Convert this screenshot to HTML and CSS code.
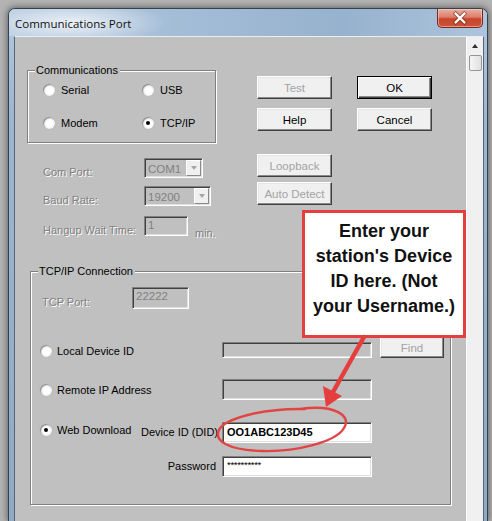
FILE: index.html
```html
<!DOCTYPE html>
<html>
<head>
<meta charset="utf-8">
<title>Communications Port</title>
<link rel="stylesheet" href="styles.css">
</head>
<body>
<div class="window">
  <div class="titlebar">
    <span class="title">Communications Port</span>
    <div class="close">
      <svg width="46" height="18" viewBox="0 0 46 18">
        <path d="M18.5 4.5 L27.5 13.5 M27.5 4.5 L18.5 13.5" stroke="#5a1a10" stroke-width="4.2" stroke-linecap="square" fill="none" opacity="0.55"/>
        <path d="M18.5 4.5 L27.5 13.5 M27.5 4.5 L18.5 13.5" stroke="#ffffff" stroke-width="2.4" stroke-linecap="square" fill="none"/>
      </svg>
    </div>
  </div>
  <div class="client">
    <div class="dialog">
      <div class="top">
        <div class="left">
          <div class="group comms">
            <div class="group-title">Communications</div>
            <div class="radio-grid">
              <div class="radio"><span class="dot"></span>Serial</div>
              <div class="radio"><span class="dot"></span>USB</div>
              <div class="radio"><span class="dot"></span>Modem</div>
              <div class="radio"><span class="dot on"></span>TCP/IP</div>
            </div>
          </div>
          <div class="frow r1">
            <span class="lbl dis">Com Port:</span>
            <div class="combo w59"><span class="cval">COM1</span><span class="arrow"></span></div>
          </div>
          <div class="frow r2">
            <span class="lbl dis">Baud Rate:</span>
            <div class="combo w67"><span class="cval">19200</span><span class="arrow"></span></div>
          </div>
          <div class="frow r3">
            <span class="lbl dis">Hangup Wait Time:</span>
            <div class="tb w44">1</div>
            <span class="unit dis">min.</span>
          </div>
        </div>
        <div class="right">
          <div class="bgrid">
            <div class="btn dis">Test</div>
            <div class="btn def">OK</div>
            <div class="btn">Help</div>
            <div class="btn">Cancel</div>
          </div>
          <div class="bcol">
            <div class="btn dis">Loopback</div>
            <div class="btn dis">Auto Detect</div>
          </div>
        </div>
      </div>

      <div class="group tcp">
        <div class="group-title">TCP/IP Connection</div>
        <div class="trow t1">
          <span class="plbl dis">TCP Port:</span>
          <div class="tb w57">22222</div>
        </div>
        <div class="trow t2">
          <div class="rpart"><span class="dot"></span>Local Device ID</div>
          <div class="tb w150 short"></div>
          <div class="btn dis find">Find</div>
        </div>
        <div class="trow t3">
          <div class="rpart"><span class="dot"></span>Remote IP Address</div>
          <div class="tb w150"></div>
        </div>
        <div class="trow t4">
          <div class="rpart"><span class="dot on"></span>Web Download<span class="did">Device ID (DID)</span></div>
          <div class="tb w150 en did-val">OO1ABC123D45</div>
        </div>
        <div class="trow t5">
          <div class="rpart pw">Password</div>
          <div class="tb w150 en pw-val">**********</div>
        </div>
      </div>
    </div>
    <div class="scrollbar">
      <div class="sb-up"></div>
      <div class="sb-thumb"></div>
    </div>
  </div>
</div>

<div class="callout">Enter your<br>station's Device<br>ID here. (Not<br>your Username.)</div>

<svg class="marks" width="492" height="521" viewBox="0 0 492 521">
  <line x1="364" y1="337" x2="333" y2="392" stroke="#e53e3e" stroke-width="4.5" stroke-linecap="round"/>
  <polygon points="326,407 323,386 342,396" fill="#e53e3e"/>
  <path d="M300 409 C 335 404, 352 416, 344 428 C 336 442, 296 452, 262 451 C 228 450, 214 441, 219 430 C 224 419, 262 408, 305 409" fill="none" stroke="#e24444" stroke-width="2.4" stroke-linecap="round"/>
</svg>
</body>
</html>
```

FILE: styles.css
```css
* { box-sizing: border-box; }
html, body { margin: 0; padding: 0; }
body {
  width: 492px;
  height: 521px;
  overflow: hidden;
  position: relative;
  background: #b3b3b3;
  font-family: "Liberation Sans", Arial, sans-serif;
  font-size: 11px;
  color: #000;
}
.window {
  margin: 8px 0 0 8px;
  width: 480px;
  height: 513px;
  border: 1px solid #34414f;
  border-bottom: none;
  border-radius: 7px 7px 0 0;
  background: linear-gradient(180deg, #c9d9ea 0px, #adc3da 30px, #9fb6cf 110px, #91a9c3 100%);
  box-shadow: 0 0 6px 1px rgba(0, 0, 0, 0.45);
  padding: 0 3px 0 5px;
  display: flex;
  flex-direction: column;
}
.titlebar {
  height: 27px;
  flex: none;
  display: flex;
  margin: 0 -3px 0 -5px;
  padding: 0 4px 0 6px;
  border-radius: 6px 6px 0 0;
  background:
    radial-gradient(ellipse 95px 22px at 62px 14px, rgba(255,255,255,0.75), rgba(255,255,255,0) 100%),
    linear-gradient(90deg, #b7cbe0 0%, #a4bdd7 35%, #97b2ce 70%, #adc4dc 100%);
}
.title {
  flex: 1;
  align-self: center;
  font-family: "Open Sans", "Noto Sans", sans-serif;
  font-size: 11.5px;
  color: #111;
  padding-top: 1px;
}
.close {
  width: 46px;
  height: 19px;
  align-self: flex-start;
  border: 1px solid #7d2a1e;
  border-top: none;
  border-radius: 0 0 5px 5px;
  background: linear-gradient(180deg, #eab0a2 0%, #dc7e69 45%, #c8442b 55%, #c9553a 100%);
  box-shadow: inset 0 0 0 1px rgba(255,220,210,0.5);
  display: flex;
  align-items: center;
  justify-content: center;
}
.close svg { display: block; }
.client {
  flex: 1;
  min-height: 0;
  display: flex;
  border: 1px solid #55657a;
  border-top-color: #e7eef6;
  border-bottom: none;
}
.dialog {
  flex: 1;
  background: #c0c0c0;
}
.top { display: flex; }
.left {
  margin-left: 12px;
  width: 189px;
  flex: none;
  padding-top: 33px;
}
.group {
  border: 1px solid #808080;
  box-shadow: 1px 1px 0 #fff, inset 1px 1px 0 #fff;
}
.group-title {
  width: fit-content;
  margin: -7px 0 0 7px;
  padding: 0 2px 0 1px;
  line-height: 13px;
  background: #c0c0c0;
}
.comms { height: 73px; }
.radio-grid {
  display: grid;
  grid-template-columns: 99px 80px;
  row-gap: 13px;
  margin-top: 3px;
  padding-left: 15px;
}
.radio {
  display: flex;
  align-items: center;
  gap: 6px;
  height: 20px;
}
.dot {
  width: 12px;
  height: 12px;
  flex: none;
  border-radius: 50%;
  position: relative;
  background: radial-gradient(circle at 55% 55%, #ffffff 0 3px, #f3f3f3 5px, #e6e6e6 6px);
  box-shadow: inset 1px 1px 1px #8c8c8c, 0 0 0 0.5px #b8b8b8;
}
.dot.on::after {
  content: "";
  position: absolute;
  left: 4px;
  top: 4px;
  width: 4px;
  height: 4px;
  border-radius: 50%;
  background: #000;
}
.frow {
  display: flex;
  height: 20px;
  padding-left: 16px;
}
.r1 { margin-top: 15px; }
.r2 { margin-top: 8px; }
.r3 { margin-top: 10px; }
.lbl {
  width: 101px;
  flex: none;
  padding-top: 8px;
  white-space: nowrap;
}
.dis {
  color: #808080;
  text-shadow: 1px 1px 0 #fff;
}
.unit { margin-left: 7px; padding-top: 11px; }
.combo {
  height: 20px;
  display: flex;
  align-items: center;
  border: 1px solid;
  border-color: #808080 #fff #fff #808080;
  box-shadow: inset 1px 1px 0 #404040, inset -1px -1px 0 #dfdfdf;
  background: #c0c0c0;
  color: #808080;
  padding: 0 1px 0 3px;
  font-size: 11.5px;
}
.w59 { width: 59px; }
.w67 { width: 67px; }
.cval { flex: 1; padding-top: 1px; }
.arrow {
  width: 15px;
  height: 16px;
  flex: none;
  background: #f0f0f0;
  border: 1px solid;
  border-color: #fff #8a8a8a #8a8a8a #fff;
  display: flex;
  align-items: center;
  justify-content: center;
}
.arrow::before {
  content: "";
  border-left: 3.5px solid transparent;
  border-right: 3.5px solid transparent;
  border-top: 4px solid #a5a5a5;
}
.tb {
  height: 20px;
  flex: none;
  border: 1px solid;
  border-color: #808080 #fff #fff #808080;
  box-shadow: inset 1px 1px 0 #404040, inset -1px -1px 0 #dfdfdf;
  background: #c0c0c0;
  color: #808080;
  padding: 2px 3px 0;
  line-height: 13px;
  font-size: 11.5px;
}
.w44 { width: 44px; }
.w57 { width: 57px; height: 22px; }
.w150 { width: 150px; height: 21px; }
.tb.short { height: 16px; align-self: flex-end; }
.tb.en { background: #fff; color: #000; }
.did-val {
  font-weight: bold;
  font-size: 11px;
  display: flex;
  align-items: center;
  padding: 0 4px;
}
.pw-val {
  font-size: 9.5px;
  line-height: 10px;
  padding: 3px 4px 0;
  letter-spacing: -0.3px;
}
.right {
  margin-left: 41px;
  padding-top: 39px;
}
.bgrid {
  display: grid;
  grid-template-columns: 75px 75px;
  column-gap: 25px;
  row-gap: 9px;
}
.btn {
  height: 23px;
  display: flex;
  align-items: center;
  justify-content: center;
  background: #f0f0f0;
  border: 1px solid;
  border-color: #fff #404040 #404040 #fff;
  box-shadow: inset -1px -1px 0 #8a8a8a, inset 1px 1px 0 #e6e6e6;
  color: #000;
  font-size: 11.5px;
}
.btn.def {
  border-color: #000;
  box-shadow: inset 1px 1px 0 #fff, inset -1px -1px 0 #404040, inset -2px -2px 0 #8a8a8a;
}
.btn.dis {
  color: #a3a3a3;
  text-shadow: none;
}
.bcol {
  margin-top: 23px;
  width: 75px;
  display: flex;
  flex-direction: column;
  gap: 5px;
}
.tcp {
  margin: 35px 0 0 15px;
  width: 421px;
  height: 234px;
}
.trow {
  display: flex;
  align-items: center;
  height: 21px;
  padding-left: 9px;
}
.t1 { margin-top: 9px; padding-left: 11px; height: 22px; }
.t2 { margin-top: 28px; }
.t3 { margin-top: 21px; }
.t4 { margin-top: 22px; }
.t5 { margin-top: 12px; height: 22px; }
.plbl { width: 90px; flex: none; padding-top: 8px; }
.rpart {
  width: 182px;
  flex: none;
  display: flex;
  align-items: center;
  gap: 5px;
  white-space: nowrap;
}
.t2 .rpart { padding-top: 7px; }
.t4 .rpart { padding-bottom: 5px; }
.did { margin-left: auto; margin-right: 4px; padding-top: 3px; }
.rpart.pw { justify-content: flex-end; padding-right: 6px; }
.find { width: 64px; height: 21px; margin-left: 8px; }
.scrollbar {
  width: 17px;
  flex: none;
  background: #f0f0f0;
  border-left: 1px solid #fbfbfb;
  display: flex;
  flex-direction: column;
  align-items: center;
}
.sb-up {
  height: 17px;
  width: 100%;
  display: flex;
  align-items: center;
  justify-content: center;
}
.sb-up::before {
  content: "";
  border-left: 3.5px solid transparent;
  border-right: 3.5px solid transparent;
  border-bottom: 4px solid #2e2e2e;
}
.sb-thumb {
  width: 13px;
  height: 16px;
  margin-top: 1px;
  border: 1px solid #969696;
  border-radius: 2px;
  background: linear-gradient(90deg, #f6f6f6, #e0e0e0);
}
.callout {
  position: absolute;
  left: 302px;
  top: 210px;
  width: 164px;
  height: 128px;
  border: 3px solid #e53e3e;
  background: #fff;
  padding-top: 6px;
  text-align: center;
  font: bold 18px/25px "Liberation Sans", Arial, sans-serif;
  color: #111;
}
.marks {
  position: absolute;
  left: 0;
  top: 0;
  pointer-events: none;
}
```
